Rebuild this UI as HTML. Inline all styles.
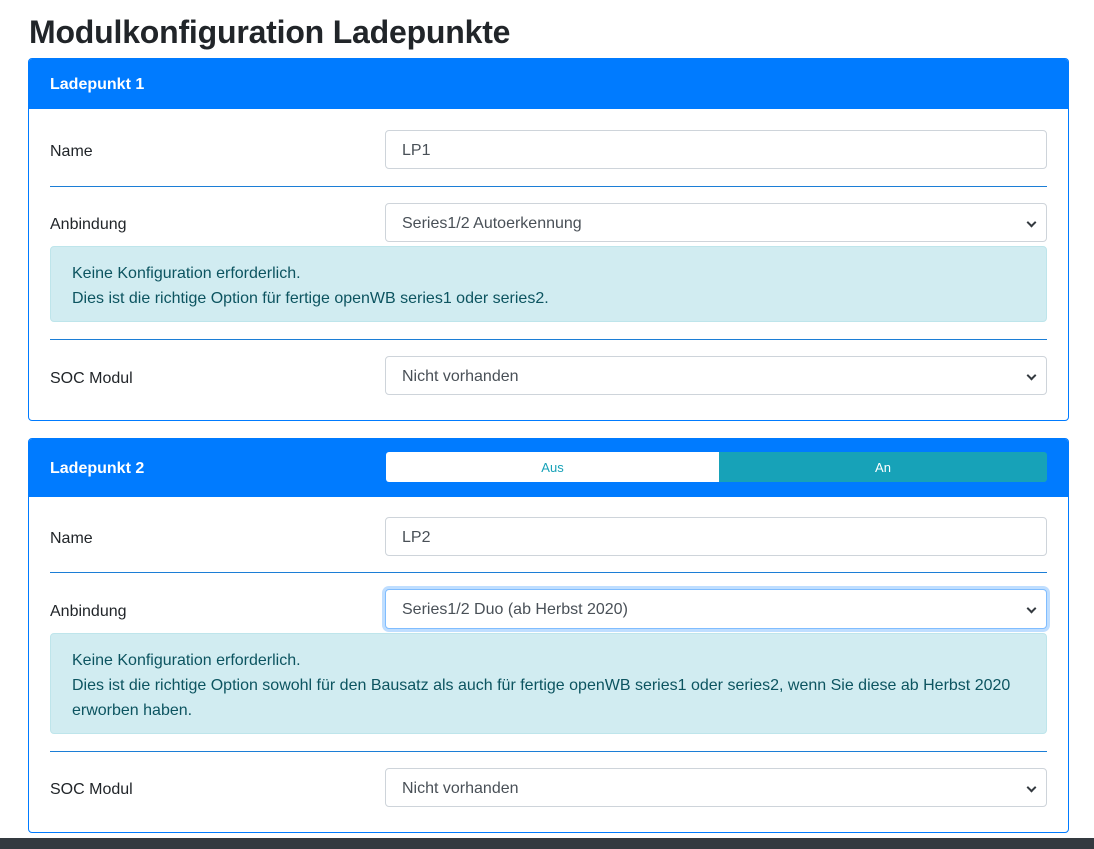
<!DOCTYPE html>
<html><head><meta charset="utf-8"><style>
*{box-sizing:border-box;margin:0;padding:0}
body{width:1094px;height:849px;background:#fff;font-family:"Liberation Sans",sans-serif;color:#212529;font-size:16px;position:relative;overflow:hidden}
.a{position:absolute}
h1{position:absolute;left:29px;top:14px;font-size:32px;font-weight:bold;color:#212529;letter-spacing:-0.2px}
.card{position:absolute;left:28px;width:1041px;border:1px solid #007bff;border-radius:4px;overflow:hidden}
.hd{background:#007bff;color:#fff;font-weight:bold;font-size:16px;padding-left:21px;position:relative}
.lbl{position:absolute;left:50px;font-size:16px}
.inp{position:absolute;left:385px;width:662px;height:39px;border:1px solid #ced4da;border-radius:4px;padding:0 16px;line-height:40px;font-size:16px;color:#495057;background:#fff}
.sel:after{content:"";position:absolute;right:11px;top:15px;width:5px;height:5px;border-right:2px solid #343a40;border-bottom:2px solid #343a40;transform:rotate(45deg)}
.line{position:absolute;left:50px;width:997px;height:1px;background:#1c7ed6}
.alert{position:absolute;left:50px;width:997px;background:#d1ecf1;border:1px solid #bee5eb;border-radius:4px;color:#0c5460;padding:14px 21px;line-height:25px;font-size:16px}
</style></head><body>
<h1>Modulkonfiguration Ladepunkte</h1>

<div class="card" style="top:58px;height:363px">
<div class="hd" style="height:50px;line-height:52px">Ladepunkt 1</div>
</div>
<div class="lbl" style="top:143px">Name</div>
<div class="inp" style="top:130px">LP1</div>
<div class="line" style="top:186px"></div>
<div class="lbl" style="top:216px">Anbindung</div>
<div class="inp sel" style="top:203px">Series1/2 Autoerkennung</div>
<div class="alert" style="top:246px;height:76px">Keine Konfiguration erforderlich.<br>Dies ist die richtige Option für fertige openWB series1 oder series2.</div>
<div class="line" style="top:339px"></div>
<div class="lbl" style="top:370px">SOC Modul</div>
<div class="inp sel" style="top:356px">Nicht vorhanden</div>

<div class="card" style="top:438px;height:395px">
<div class="hd" style="height:58px;line-height:60px">Ladepunkt 2</div>
</div>
<div class="a" style="left:386px;top:452px;width:333px;height:30px;background:#fff;border-radius:3px 0 0 3px;color:#17a2b8;font-size:13px;text-align:center;line-height:31px">Aus</div>
<div class="a" style="left:719px;top:452px;width:328px;height:30px;background:#17a2b8;border-radius:0 3px 3px 0;color:#fff;font-size:13px;text-align:center;line-height:31px">An</div>
<div class="lbl" style="top:530px">Name</div>
<div class="inp" style="top:517px">LP2</div>
<div class="line" style="top:572px"></div>
<div class="lbl" style="top:603px">Anbindung</div>
<div class="inp sel" style="top:589px;height:40px;border-color:#80bdff;box-shadow:0 0 0 3px rgba(0,123,255,.25)">Series1/2 Duo (ab Herbst 2020)</div>
<div class="alert" style="top:633px;height:101px">Keine Konfiguration erforderlich.<br>Dies ist die richtige Option sowohl für den Bausatz als auch für fertige openWB series1 oder series2, wenn Sie diese ab Herbst 2020 erworben haben.</div>
<div class="line" style="top:751px"></div>
<div class="lbl" style="top:781px">SOC Modul</div>
<div class="inp sel" style="top:768px">Nicht vorhanden</div>

<div class="a" style="left:0;top:838px;width:1094px;height:11px;background:#343a40"></div>
</body></html>
